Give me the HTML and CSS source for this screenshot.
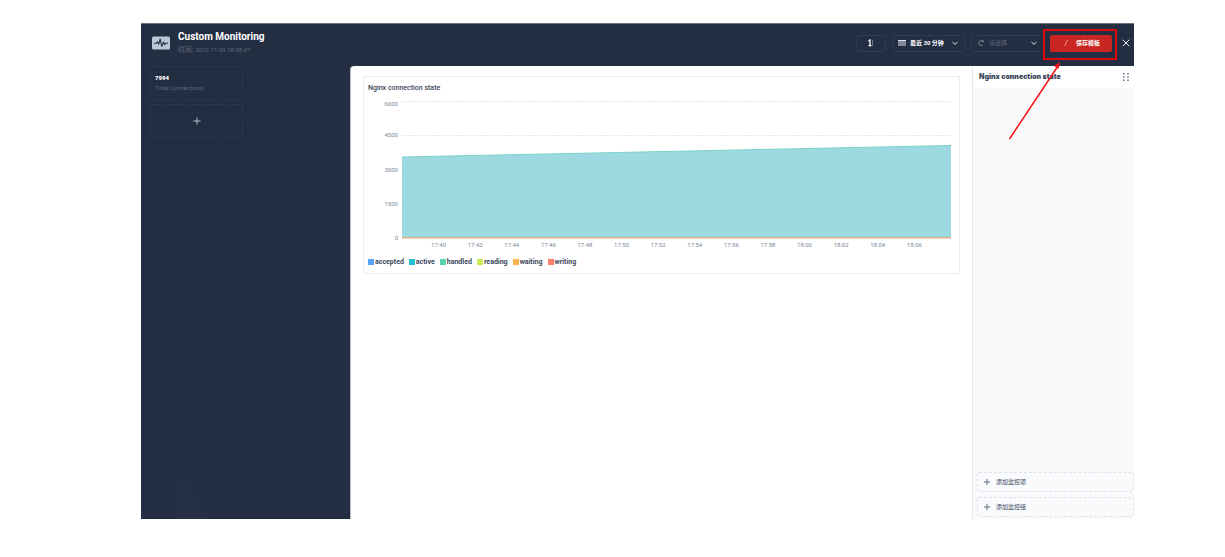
FILE: index.html
```
<!DOCTYPE html>
<html lang="en">
<head>
<meta charset="utf-8">
<title>Custom Monitoring</title>
<link rel="stylesheet" href="styles.css">
</head>
<body>
<div class="app">
  <header class="header">
    <svg class="logo" viewBox="0 0 18 14"><rect y="0.5" width="18" height="13" rx="1.5" fill="#b9c7d6"/><path d="M2 7.200h2.500l1-1.500 1.200 2.500 1.500-5.200 1.500 7.500 1.800-4.500 1.200 2.700 1-1.500h2.300" fill="none" stroke="#242e42" stroke-width="1.1" stroke-linejoin="round"/></svg>
    <div class="heading">
      <h1 class="title">Custom Monitoring</h1>
      <p class="subtitle">时间: <time class="stamp">2022-11-09 18:08:47</time></p>
    </div>
    <div class="tools">
      <button class="tool tool-text" type="button" aria-label="Text mode">
        <svg class="icon" viewBox="0 0 8 8"><path d="M1.5 2l1.5-1v5.5M1.5 6.7h3" stroke="#fff" stroke-width="1.3" fill="none"/><path d="M5.6 1v6" stroke="#6d7a8e" stroke-width="1"/></svg>
      </button>
      <label class="tool field range">
        <svg class="icon" viewBox="0 0 8 8"><path d="M0 1h8v1.6H0zM0 3.6h8v1H0zM0 5.4h8v1.2H0z" fill="#dfe5ec"/></svg>
        <select class="select" aria-label="Time range"><option>最近 30 分钟</option></select>
        <svg class="chevron" viewBox="0 0 8 8"><path d="M1.500 3L4 5.300 6.500 3" fill="none" stroke="#dfe5ec"/></svg>
      </label>
      <label class="tool field refresh">
        <svg class="icon" viewBox="0 0 8 8"><path d="M5.8 6A2.5 2.5 0 1 1 5.7 2.2M4.3 2.7h2V.8" fill="none" stroke="#8d98a8" stroke-width=".8"/></svg>
        <select class="select" aria-label="Refresh interval"><option>请选择</option></select>
        <svg class="chevron" viewBox="0 0 8 8"><path d="M1.500 3L4 5.300 6.500 3" fill="none" stroke="#dfe5ec"/></svg>
      </label>
      <button class="tool save" type="button">
        <svg class="icon" viewBox="0 0 8 8"><path d="M2.5 7l3-6" stroke="#ef9a96" stroke-width=".9"/></svg>
        <span>保存模板</span>
      </button>
      <button class="close" type="button" aria-label="Close"><svg class="icon" viewBox="0 0 8 8"><path d="M.7.7l6.6 6.6M7.3.7L.7 7.3" stroke="#e4e9ef"/></svg></button>
    </div>
  </header>
  <div class="body">
    <aside class="sidebar">
      <div class="metric"><strong class="metric-value">7994</strong><span class="metric-name">Total Connections</span></div>
      <button class="metric metric-add" type="button" aria-label="Add metric"><svg class="icon" viewBox="0 0 8 8"><path d="M4 .5v7M.5 4h7" stroke="#c3ccd8" stroke-width=".9"/></svg></button>
      <svg class="decor" viewBox="0 0 70 100"><path d="M16 0l38 66M8 50l30 50M35 65l12-7 20 42H38z" fill="#253045" stroke="none"/><path d="M16 0l38 66M8 50l30 50" fill="none" stroke="#28334a"/></svg>
    </aside>
    <main class="main">
      <section class="card">
        <h2 class="card-title">Nginx connection state</h2>
        <div class="chart">
          <div class="y-axis"><span>6000</span><span>4500</span><span>3000</span><span>1500</span><span>0</span></div>
          <svg class="plot" viewBox="0 0 549 137" preserveAspectRatio="none">
            <g stroke="#e4e6ea" stroke-dasharray="2 1"><path d="M0 .5h549M0 34.5h549M0 68.5h549M0 102.5h549"/></g>
            <path d="M0 56L549 44.5V137H0z" fill="#9cd9e0"/>
            <path d="M0 56L549 44.5" stroke="#7bd3c7"/>
            <path d="M0 68.5h549M0 102.5h549" stroke="#96d4db" stroke-dasharray="2 1"/>
            <path d="M0 136.5h549" stroke="#d9ad8c"/>
            <path d="M0 137.5h549" stroke="#f7dfc4"/>
          </svg>
          <div class="x-axis"><span>17:40</span><span>17:42</span><span>17:44</span><span>17:46</span><span>17:48</span><span>17:50</span><span>17:52</span><span>17:54</span><span>17:56</span><span>17:58</span><span>18:00</span><span>18:02</span><span>18:04</span><span>18:06</span></div>
        </div>
        <ul class="legend">
          <li class="accepted">accepted</li><li class="active">active</li><li class="handled">handled</li><li class="reading">reading</li><li class="waiting">waiting</li><li class="writing">writing</li>
        </ul>
      </section>
    </main>
    <aside class="panel">
      <div class="panel-head">
        <h2 class="panel-title">Nginx connection state</h2>
        <svg class="grip" viewBox="0 0 8 8"><path d="M1 0h1.6v1.6H1zM5.2 0h1.6v1.6H5.2zM1 3.2h1.6v1.6H1zM5.2 3.2h1.6v1.6H5.2zM1 6.4h1.6V8H1zM5.2 6.4h1.6V8H5.2z" fill="#68758a"/></svg>
      </div>
      <div class="panel-actions">
        <button class="add" type="button"><svg class="icon" viewBox="0 0 8 8"><path d="M4 1v6M1 4h6" stroke="#5f6c80"/></svg>添加监控项</button>
        <button class="add" type="button"><svg class="icon" viewBox="0 0 8 8"><path d="M4 1v6M1 4h6" stroke="#5f6c80"/></svg>添加监控组</button>
      </div>
    </aside>
  </div>
  <svg class="callout" viewBox="0 0 110 114"><rect x="36" y="2" width="72" height="29" fill="none" stroke="#d9090e" stroke-width="2"/><path d="M1.500 111L50 38" stroke="#fb1015" stroke-width="1.500"/><path d="M52 34l-1.500 7-4.500-3z" fill="#fb1015"/></svg>
</div>
</body>
</html>
```
FILE: styles.css
```
* { box-sizing: border-box; }
body {
  margin: 0;
  min-height: 100vh;
  display: flex;
  padding: 23px 91px 38px 141px;
  background: #fff;
  color: #3b465c;
  font: 6px/12px Roboto, "Noto Sans CJK SC", sans-serif;
}
h1, h2, p, ul { margin: 0; padding: 0; }
button, select { font: inherit; color: inherit; border: 0; padding: 0; background: none; }
svg { display: block; }
.app { position: relative; flex: 1; display: flex; flex-direction: column; background: #242e42; border-top: 1px solid #697181; }
.icon, .chevron { width: 8px; height: 8px; flex: none; }

.header { display: flex; align-items: center; height: 42px; padding: 0 4px 4px 11px; gap: 8px; }
.logo { width: 18px; height: 14px; }
.title { font-size: 10px; line-height: 14px; color: #fff; }
.subtitle { font-size: 7px; line-height: 12px; color: #5d687c; }
.stamp { font-size: 6px; }
.tools { display: flex; align-items: center; gap: 6px; margin-left: auto; }
.tool { display: flex; align-items: center; justify-content: center; height: 17px; border: 1px solid #303b50; border-radius: 2px; }
.tool-text { width: 30px; }
.field { width: 73px; padding: 0 5px; }
.select { appearance: none; flex: 1; min-width: 0; height: 15px; margin-left: 4px; outline: 0; }
.range { color: #fff; font-weight: 700; }
.refresh { color: #5d687c; }
.save { width: 62px; gap: 6px; border-color: #ca2621; background: #ca2621; color: #fff; font-weight: 700; }
.close { margin-left: 4px; padding: 0; }

.body { flex: 1; display: grid; grid-template-columns: 209px minmax(0, 1fr) 162px; }
.sidebar { position: relative; display: flex; flex-direction: column; gap: 4px; padding: 0 8px 0 9px; }
.metric { display: flex; flex-direction: column; width: 93px; height: 34px; padding: 6px 4px; border: 1px dashed #303b50; border-radius: 2px; }
.metric-value { line-height: 10px; color: #fff; font-weight: 900; }
.metric-name { line-height: 10px; color: #5d687c; }
.metric-add { align-items: center; justify-content: center; }
.decor { position: absolute; left: 0; bottom: 0; width: 70px; height: 100px; }

.main { padding: 10px 12px; background: #fff; border-left: 1px solid #b9bdc8; border-top-left-radius: 4px; }
.card { padding: 5px 8px 5px 4px; height: 198px; border: 1px solid #e9ecf1; border-radius: 2px; }
.card-title { font-size: 7px; line-height: 12px; font-weight: 500; }
.chart { display: grid; grid-template-columns: 30px minmax(0, 1fr); column-gap: 4px; margin-top: 7px; color: #79879c; line-height: 8px; }
.y-axis { display: flex; flex-direction: column; justify-content: space-between; height: 145px; margin: -4px 0 -1px; text-align: right; }
.y-axis span:first-child { padding-top: 3px; margin-bottom: -3px; }
.plot { width: 100%; height: 137px; overflow: visible; }
.x-axis { grid-column: 2; display: flex; padding: 0 calc(100% / 30); }
.x-axis span { flex: 1 0 0; text-align: center; }
.legend { display: flex; gap: 5px; margin-top: 8px; list-style: none; font-size: 7px; line-height: 10px; font-weight: 700; }
.legend li { display: flex; align-items: center; gap: 1px; }
.legend li::before { content: ""; width: 6px; height: 6px; background: currentColor; }
.accepted::before { color: #5aa3fb; }
.active::before { color: #24c0d8; }
.handled::before { color: #5ad4b0; }
.reading::before { color: #cbe952; }
.waiting::before { color: #fcb34c; }
.writing::before { color: #fa806a; }

.panel { display: flex; flex-direction: column; background: #f9fafc; border-left: 1px solid #e5e8ef; }
.panel-head { display: flex; align-items: center; justify-content: space-between; height: 22px; padding: 0 4px 0 6px; background: #fff; }
.panel-title { font-size: 7px; line-height: 12px; font-weight: 900; font-family: Inter, Roboto, sans-serif; }
.grip { width: 8px; height: 8px; }
.panel-actions { display: flex; flex-direction: column; gap: 5px; margin-top: auto; padding: 0 0 2px 4px; }
.add { display: flex; align-items: center; gap: 5px; height: 20px; padding: 0 5px; border: 1px dashed #dde2ea; border-radius: 2px; }

.callout { position: absolute; top: 4px; right: 16px; width: 110px; height: 114px; pointer-events: none; }
```
